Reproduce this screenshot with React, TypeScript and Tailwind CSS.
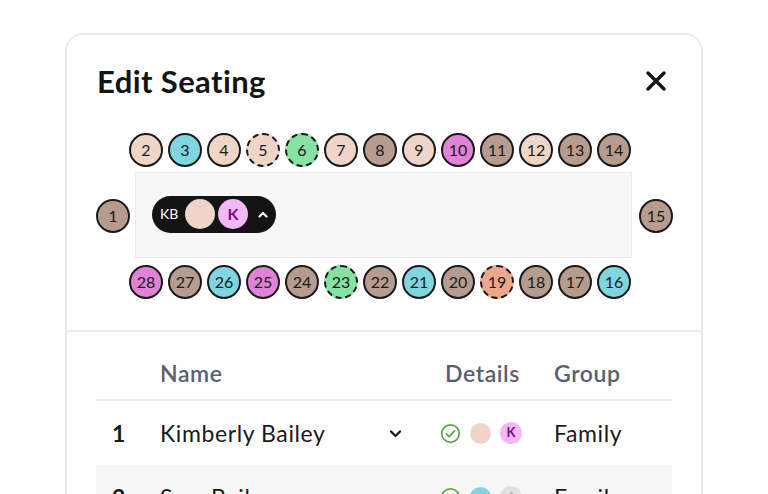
import React from 'react';

type Seat = { n: number; color: string; dashed?: boolean };

const colors = {
  beige: 'bg-[#efd5c8]',
  cyan: 'bg-[#7fd5e0]',
  brown: 'bg-[#b59c8f]',
  pink: 'bg-[#e083d8]',
  green: 'bg-[#86e2a2]',
  orange: 'bg-[#eda78a]',
};

const topRow: Seat[] = [
  { n: 2, color: colors.beige },
  { n: 3, color: colors.cyan },
  { n: 4, color: colors.beige },
  { n: 5, color: colors.beige, dashed: true },
  { n: 6, color: colors.green, dashed: true },
  { n: 7, color: colors.beige },
  { n: 8, color: colors.brown },
  { n: 9, color: colors.beige },
  { n: 10, color: colors.pink },
  { n: 11, color: colors.brown },
  { n: 12, color: colors.beige },
  { n: 13, color: colors.brown },
  { n: 14, color: colors.brown },
];

const bottomRow: Seat[] = [
  { n: 28, color: colors.pink },
  { n: 27, color: colors.brown },
  { n: 26, color: colors.cyan },
  { n: 25, color: colors.pink },
  { n: 24, color: colors.brown },
  { n: 23, color: colors.green, dashed: true },
  { n: 22, color: colors.brown },
  { n: 21, color: colors.cyan },
  { n: 20, color: colors.brown },
  { n: 19, color: colors.orange, dashed: true },
  { n: 18, color: colors.brown },
  { n: 17, color: colors.brown },
  { n: 16, color: colors.cyan },
];

const SeatDot: React.FC<{ seat: Seat }> = ({ seat }) => (
  <div
    className={`w-[34px] h-[34px] shrink-0 rounded-full border-[2.5px] border-[#1a1a1a] flex items-center justify-center text-[16px] text-[#1a1a1a] ${seat.color} ${seat.dashed ? 'border-dashed' : 'border-solid'}`}
  >
    {seat.n}
  </div>
);

const CheckCircle = () => (
  <svg width="21" height="21" viewBox="0 0 24 24" fill="none" stroke="#5ea54c" strokeWidth="2" strokeLinecap="round" strokeLinejoin="round">
    <circle cx="12" cy="12" r="10" />
    <path d="M7.5 12.5l3 3 6-6.5" />
  </svg>
);

const ChevronDown = () => (
  <svg width="13" height="9" viewBox="0 0 13 9" fill="none" stroke="#1a1a1a" strokeWidth="2.4" strokeLinecap="round" strokeLinejoin="round">
    <path d="M2 2.5l4.5 4.5 4.5-4.5" />
  </svg>
);

const App: React.FC = () => {
  return (
    <div className="w-[768px] h-[494px] overflow-hidden bg-white pt-[33px] px-[65px]" style={{ fontFamily: 'Lato, "Open Sans", sans-serif' }}>
      <div className="h-[520px] rounded-[18px] border-2 border-[#ebebeb] bg-white">
        {/* Header */}
        <div className="flex items-center justify-between pl-[30px] pr-[34px] pt-[26px]">
          <h1 className="text-[31px] font-bold text-[#141414] leading-[40px] tracking-[0.4px]">Edit Seating</h1>
          <svg width="22" height="22" viewBox="0 0 22 22" fill="none" stroke="#141414" strokeWidth="3.4" strokeLinecap="round">
            <path d="M3 3l16 16M19 3L3 19" />
          </svg>
        </div>

        {/* Seating chart */}
        <div className="flex items-center pl-[29px] pt-[32px]">
          <SeatDot seat={{ n: 1, color: colors.brown }} />
          <div className="flex flex-col ml-[-1px]">
            <div className="flex gap-[5px]">
              {topRow.map((s) => (
                <SeatDot key={s.n} seat={s} />
              ))}
            </div>
            <div className="ml-[6px] mt-[5px] mb-[7px] w-[497px] h-[86px] bg-[#f7f7f7] border border-[#ebebeb] flex items-center pl-[16px]">
              <div className="h-[37px] rounded-full bg-[#141414] flex items-center pl-[8px] pr-[8px] mb-[2px]">
                <span className="text-white text-[14px] w-[17px] leading-none">KB</span>
                <div className="ml-[8px] w-[30px] h-[30px] rounded-full bg-[#efd5c8]" />
                <div className="ml-[3px] w-[30px] h-[30px] rounded-full bg-[#f3b8f8] flex items-center justify-center text-[#7a0a8a] font-bold text-[16px]">K</div>
                <svg className="ml-[10px]" width="10" height="7" viewBox="0 0 10 7" fill="none" stroke="white" strokeWidth="2.2" strokeLinecap="round" strokeLinejoin="round">
                  <path d="M1.5 5.5L5 2l3.5 3.5" />
                </svg>
              </div>
            </div>
            <div className="flex gap-[5px]">
              {bottomRow.map((s) => (
                <SeatDot key={s.n} seat={s} />
              ))}
            </div>
          </div>
          <div className="ml-[7px]">
            <SeatDot seat={{ n: 15, color: colors.brown }} />
          </div>
        </div>

        {/* Divider */}
        <div className="mt-[31px] border-t-2 border-[#ebebeb]" />

        {/* Guest table */}
        <div className="px-[29px]">
          <div className="grid grid-cols-[64px_280px_114px_1fr] items-center pt-[27px] pb-[12px] border-b-2 border-[#ebebeb] text-[23px] tracking-[0.6px] font-semibold text-[#5a5e70] leading-[28px]">
            <div />
            <div>Name</div>
            <div className="pl-[5px]">Details</div>
            <div>Group</div>
          </div>

          <div className="grid grid-cols-[64px_280px_114px_1fr] items-center h-[64px] text-[23px] tracking-[0.6px] text-[#1a1a1a]">
            <div className="pl-[16px] font-bold">1</div>
            <div className="flex items-center justify-between pr-[38px]">
              <span>Kimberly Bailey</span>
              <ChevronDown />
            </div>
            <div className="flex items-center gap-[9px]">
              <CheckCircle />
              <div className="w-[21px] h-[21px] rounded-full bg-[#efd5c8]" />
              <div className="w-[22px] h-[22px] rounded-full bg-[#f3b8f8] flex items-center justify-center text-[#7a0a8a] font-bold text-[13px] tracking-normal">K</div>
            </div>
            <div>Family</div>
          </div>

          <div className="grid grid-cols-[64px_280px_114px_1fr] items-center h-[64px] bg-[#f7f7f7] text-[23px] tracking-[0.6px] text-[#1a1a1a]">
            <div className="pl-[16px] font-bold">2</div>
            <div className="flex items-center justify-between pr-[38px]">
              <span>Sam Bailey</span>
              <ChevronDown />
            </div>
            <div className="flex items-center gap-[9px]">
              <CheckCircle />
              <div className="w-[21px] h-[21px] rounded-full bg-[#7fd5e0]" />
              <div className="w-[22px] h-[22px] rounded-full bg-[#e6e0d8] flex items-center justify-center">
                <svg width="9" height="12" viewBox="0 0 9 12" fill="none" stroke="#8fc7d6" strokeWidth="1.2">
                  <path d="M4.5 1C3 4 1.5 6 1.5 8a3 3 0 006 0c0-2-1.5-4-3-7z" />
                </svg>
              </div>
            </div>
            <div>Family</div>
          </div>
        </div>
      </div>
    </div>
  );
};

export default App;
